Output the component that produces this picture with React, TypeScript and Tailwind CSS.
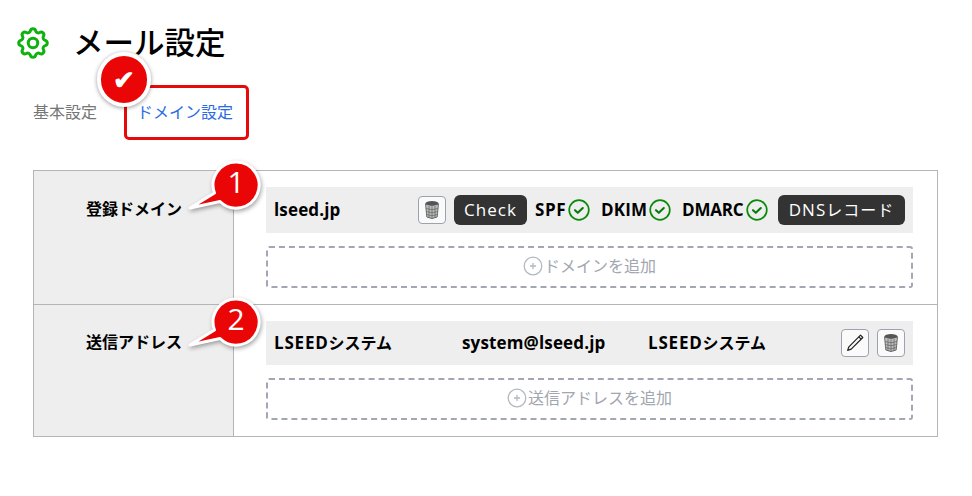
import React from "react";

const Gear = () => (
  <svg width="38" height="38" viewBox="0 0 24 24" fill="none" stroke="#0fb10f" strokeWidth="1.9" strokeLinecap="round" strokeLinejoin="round" className="shrink-0">
    <path d="M10.325 4.317c.426-1.756 2.924-1.756 3.35 0a1.724 1.724 0 0 0 2.573 1.066c1.543-.94 3.31.826 2.37 2.37a1.724 1.724 0 0 0 1.065 2.572c1.756.426 1.756 2.924 0 3.35a1.724 1.724 0 0 0-1.066 2.573c.94 1.543-.826 3.31-2.37 2.37a1.724 1.724 0 0 0-2.572 1.065c-.426 1.756-2.924 1.756-3.35 0a1.724 1.724 0 0 0-2.573-1.066c-1.543.94-3.31-.826-2.37-2.37a1.724 1.724 0 0 0-1.065-2.572c-1.756-.426-1.756-2.924 0-3.35a1.724 1.724 0 0 0 1.066-2.573c-.94-1.543.826-3.31 2.37-2.37 1 .608 2.296.07 2.572-1.065z" />
    <circle cx="12" cy="12" r="3" />
  </svg>
);

const Trash = () => (
  <svg width="16" height="20" viewBox="0 0 16 20">
    <ellipse cx="8" cy="3.5" rx="6.5" ry="2.5" fill="#555" />
    <path d="M1.5 4 L2.8 17 Q8 20 13.2 17 L14.5 4 Q8 7 1.5 4Z" fill="#bbb" stroke="#555" strokeWidth="0.8" />
    <path d="M2 8.5Q8 11 14 8.5M2.3 11.5Q8 14 13.7 11.5M2.6 14.5Q8 17 13.4 14.5M5 6v12M8 6.5v12.5M11 6v12" stroke="#555" strokeWidth="0.6" fill="none" />
  </svg>
);

const Pencil = () => (
  <svg width="20" height="20" viewBox="0 0 20 20" fill="none" stroke="#222" strokeWidth="1.2" strokeLinejoin="round">
    <path d="M15.5 2.2l2.3 2.3L6.2 16.1 2.6 17.4l1.3-3.6z" />
    <path d="M13.8 3.9l2.3 2.3" />
  </svg>
);

const Check = () => (
  <svg width="22" height="22" viewBox="0 0 22 22" fill="none" className="shrink-0">
    <circle cx="11" cy="11" r="9.8" stroke="#0a8a0a" strokeWidth="1.7" />
    <path d="M7 11.2l2.8 2.6 5-4.8" stroke="#0a7a0a" strokeWidth="2.1" strokeLinecap="round" strokeLinejoin="round" />
  </svg>
);

const Plus = () => (
  <svg width="20" height="20" viewBox="0 0 20 20" fill="none" className="shrink-0">
    <circle cx="10" cy="10" r="8.8" stroke="#b4b8c0" strokeWidth="1.3" />
    <path d="M10 7v6M7 10h6" stroke="#b4b8c0" strokeWidth="1.3" />
  </svg>
);

const IconButton = ({ children }: { children: React.ReactNode }) => (
  <button className="flex h-[28px] w-[28px] items-center justify-center rounded-[4px] border border-[#9ca3af] bg-[#fafafa]">{children}</button>
);

const DarkButton = ({ children, w }: { children: React.ReactNode; w: string }) => (
  <button className={`flex h-[30px] items-center justify-center rounded-[6px] bg-[#333333] text-[17px] font-normal tracking-[1px] text-white ${w}`}>{children}</button>
);

const Balloon = ({ label, className }: { label: string; className: string }) => (
  <div className={`absolute h-[56px] w-[76px] ${className}`}>
    <svg width="76" height="56" viewBox="0 0 76 56" className="absolute inset-0" style={{ filter: "drop-shadow(1px 2px 2px rgba(0,0,0,.35))" }}>
      <path d="M2 49 L26.5 34 A23 23 0 1 1 32 42.5 Z" fill="#ea0606" stroke="#fff" strokeWidth="3" strokeLinejoin="round" />
    </svg>
    <span className="absolute left-[26px] top-[1px] w-[44px] text-center text-[30px] font-medium leading-[44px] text-white">{label}</span>
  </div>
);

const AddBox = ({ label }: { label: string }) => (
  <div className="mt-[13px] flex h-[42px] items-center justify-center gap-[1px] rounded-[3px] border-2 border-dashed border-[#a3a6b4] pb-[2px] text-[16px] text-[#a3a6b0]">
    <Plus />
    {label}
  </div>
);

export default function App() {
  return (
    <div className="relative min-h-[496px] bg-white text-black" style={{ fontFamily: "'Open Sans', 'Noto Sans CJK JP', sans-serif" }}>
      <div className="flex items-center pl-[14px] pt-[24px]">
        <Gear />
        <h1 className="ml-[21px] -mt-[2px] text-[30.5px] font-medium leading-[32px]">メール設定</h1>
      </div>

      <div className="mt-[23px] flex items-center pl-[33px]">
        <span className="-mt-[2px] text-[16px] text-[#777777]">基本設定</span>
        <div className="ml-[27px] flex h-[55px] w-[125px] items-center justify-center rounded-[5px] border-[3px] border-[#e60a0a] pb-[2px] pr-[3px] text-[16px] text-[#2b6be4]">ドメイン設定</div>
      </div>

      <div className="relative mx-[33px] mt-[30px] w-[905px] border border-[#b5b5b5]">
        <div className="flex h-[134px] border-b border-[#b5b5b5]">
          <div className="w-[200px] shrink-0 border-r border-[#b5b5b5] bg-[#eeeeee] pl-[52px] pt-[26px] text-[16px] font-bold">登録ドメイン</div>
          <div className="flex-1 pl-[32px] pr-[24px] pt-[16px]">
            <div className="flex h-[46px] items-center bg-[#eeeeee] pl-[8px] pr-[8px] text-[16px] font-bold">
              <span className="flex-1 text-[17px] tracking-[0.15px]">lseed.jp</span>
              <IconButton><Trash /></IconButton>
              <div className="ml-[8px]"><DarkButton w="w-[73px]">Check</DarkButton></div>
              <span className="ml-[8px] w-[33px] text-[17px] tracking-[0.6px]">SPF</span><Check />
              <span className="ml-[11px] w-[48px] text-[17px] tracking-[0.2px]">DKIM</span><Check />
              <span className="ml-[11px] w-[64px] text-[17px] -tracking-[0.2px]">DMARC</span><Check />
              <div className="ml-[10px]"><DarkButton w="w-[127px]">DNS<span className="text-[16px]">レコード</span></DarkButton></div>
            </div>
            <AddBox label="ドメインを追加" />
          </div>
        </div>
        <div className="flex h-[131px]">
          <div className="w-[200px] shrink-0 border-r border-[#b5b5b5] bg-[#eeeeee] pl-[52px] pt-[25px] text-[16px] font-bold">送信アドレス</div>
          <div className="flex-1 pl-[32px] pr-[24px] pt-[16px]">
            <div className="flex h-[44px] items-center bg-[#eeeeee] pl-[8px] pr-[8px] text-[16px] font-bold">
              <span className="w-[188px]"><span className="text-[17px] tracking-[0.8px]">LSEED</span>システム</span>
              <span className="w-[186px] text-[17px] tracking-[0.15px]">system@lseed.jp</span>
              <span className="flex-1"><span className="text-[17px] tracking-[0.8px]">LSEED</span>システム</span>
              <div className="flex gap-[8px]">
                <IconButton><Pencil /></IconButton>
                <IconButton><Trash /></IconButton>
              </div>
            </div>
            <AddBox label="送信アドレスを追加" />
          </div>
        </div>
        <Balloon label="1" className="left-[154px] top-[-12px]" />
        <Balloon label="2" className="left-[154px] top-[125px]" />
      </div>

      <div className="absolute left-[97px] top-[52px] flex h-[55px] w-[54px] items-center justify-center rounded-full border-[4px] border-white bg-[#ea0606] text-[26px] font-bold text-white shadow-[0_1px_4px_rgba(0,0,0,0.4)]">✔</div>
    </div>
  );
}
